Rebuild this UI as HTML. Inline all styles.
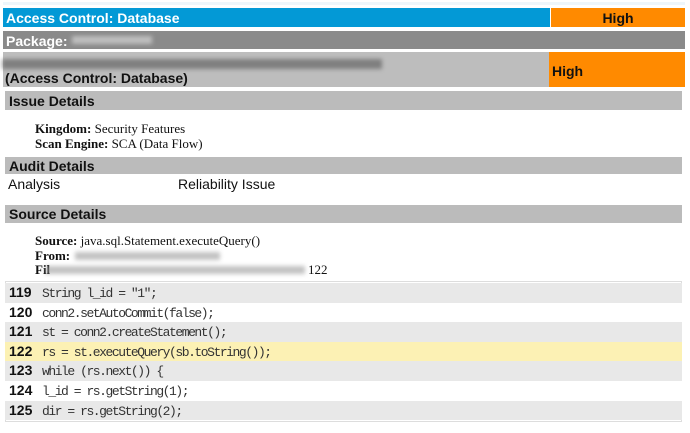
<html><head><style>
body{margin:0;width:690px;height:433px;background:#fff;position:relative;overflow:hidden;font-family:"Liberation Sans",sans-serif}
div{position:absolute;box-sizing:border-box}
.b{font-weight:bold;font-size:14px;color:#111}
.s{font-family:"Liberation Serif",serif;font-size:13px;color:#111;left:35px}
.r{left:5px;width:677px;height:19.6px;font-family:"Liberation Mono",monospace;font-size:13px;letter-spacing:-1.45px;line-height:19.6px;color:#333}
.r b{display:inline-block;width:33px;padding-left:4px;letter-spacing:0;font-family:"Liberation Sans",sans-serif;font-size:14px;color:#111}
.blur{background:#9a9a9a;filter:blur(2px);opacity:.6;height:8px}
</style></head><body>
<div style="left:3px;top:2px;width:682px;height:3px;background:#eef6fb"></div>
<div style="left:3px;top:8px;width:547px;height:19px;background:#0399d6;color:#fff;padding:2px 3px" class="b">Access Control: Database</div>
<div style="left:551px;top:8px;width:134px;height:19px;background:#ff8a00;text-align:center;padding-top:2px" class="b">High</div>
<div style="left:3px;top:31px;width:682px;height:18px;background:#8a8a8a;color:#fff;padding:2px 3px" class="b">Package:</div>
<div class="blur" style="left:72px;top:36px;width:80px;background:#ccc;opacity:.8"></div>
<div style="left:3px;top:52px;width:546px;height:35px;background:#bdbdbd"></div>
<div class="blur" style="left:2px;top:59px;width:380px;height:10px;background:#555"></div>
<div style="left:5px;top:70px;color:#111" class="b">(Access Control: Database)</div>
<div style="left:549px;top:52px;width:136px;height:35px;background:#ff8a00;padding:11px 3px" class="b">High</div>
<div style="left:5px;top:91px;width:677px;height:19px;background:#bbb;padding:2px 4px" class="b">Issue Details</div>
<div class="s" style="top:121px"><b>Kingdom:</b> Security Features</div>
<div class="s" style="top:136px"><b>Scan Engine:</b> SCA (Data Flow)</div>
<div style="left:5px;top:157px;width:677px;height:17px;background:#bbb;padding:1px 4px" class="b">Audit Details</div>
<div style="left:8px;top:176px;font-size:14px;color:#111">Analysis</div>
<div style="left:178px;top:176px;font-size:14px;color:#111">Reliability Issue</div>
<div style="left:5px;top:205px;width:677px;height:18px;background:#bbb;padding:1px 4px" class="b">Source Details</div>
<div class="s" style="top:233px"><b>Source:</b> java.sql.Statement.executeQuery()</div>
<div class="s" style="top:248px"><b>From:</b></div>
<div class="blur" style="left:75px;top:252px;width:145px"></div>
<div class="s" style="top:262px"><b>Fil</b></div>
<div class="blur" style="left:45px;top:266px;width:260px"></div>
<div class="s" style="left:308px;top:262px">122</div>
<div style="left:5px;top:281px;width:677px;height:141px;border:1px solid #ddd"></div>
<div class="r" style="top:283px;background:#e8e8e8"><b>119</b>String l_id = "1";</div>
<div class="r" style="top:302.6px;background:#fff"><b>120</b>conn2.setAutoCommit(false);</div>
<div class="r" style="top:322.2px;background:#e8e8e8"><b>121</b>st = conn2.createStatement();</div>
<div class="r" style="top:341.8px;background:#fcf1b4"><b>122</b>rs = st.executeQuery(sb.toString());</div>
<div class="r" style="top:361.4px;background:#e8e8e8"><b>123</b>while (rs.next()) {</div>
<div class="r" style="top:381px;background:#fff"><b>124</b>l_id = rs.getString(1);</div>
<div class="r" style="top:400.6px;background:#e8e8e8"><b>125</b>dir = rs.getString(2);</div>
</body></html>
